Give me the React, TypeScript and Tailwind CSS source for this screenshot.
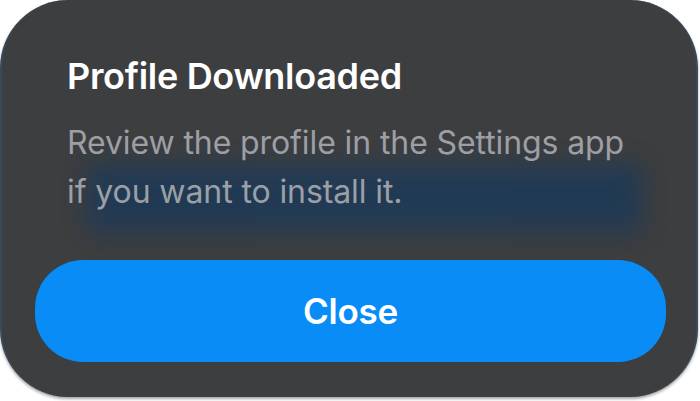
import React from 'react';

export default function App() {
  return (
    <div className="w-[700px] h-[401px] bg-white overflow-hidden">
      <div
        className="relative w-[698px] h-[397px] rounded-[68px] bg-[#3d3e3f] overflow-hidden shadow-[0_2px_3px_rgba(0,0,0,0.35)] border-x-2 border-x-[#38495c] flex flex-col"
        style={{ fontFamily: 'Inter, "Noto Sans", sans-serif' }}
      >
        {/* blurred content showing through behind the sheet */}
        <div className="absolute left-[85px] top-[164px] w-[555px] h-[68px] bg-[#1f3a57] blur-[12px] opacity-90" />

        <div className="relative px-[65px] pt-[55px]">
          <h1 className="text-[36px] leading-[42px] font-semibold text-white tracking-[-0.3px]">
            Profile Downloaded
          </h1>
          <p className="mt-[21px] text-[32px] leading-[49px] text-[#9c9fa5] tracking-[-0.1px]">
            Review the profile in the Settings app
            <br />
            if you want to install it.
          </p>
        </div>

        <div className="relative mt-auto mb-[35px] pl-[33px] pr-[30px]">
          <button className="w-full h-[102px] rounded-[48px] bg-[#0a8cf7] text-white text-[35px] font-semibold tracking-[-0.2px]">
            Close
          </button>
        </div>
      </div>
    </div>
  );
}
